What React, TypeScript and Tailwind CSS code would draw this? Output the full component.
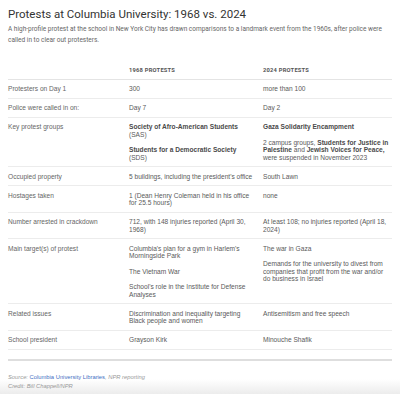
import React from "react";

const body = { fontFamily: '"Liberation Sans", Arial, sans-serif' };
const head = { fontFamily: 'Roboto, "Liberation Sans", sans-serif' };

type Cell = React.ReactNode;
const B = ({ children }: { children: React.ReactNode }) => (
  <b className="font-bold text-[#4a4a4a]">{children}</b>
);

const rows: { label: string; a: Cell; b: Cell }[] = [
  { label: "Protesters on Day 1", a: "300", b: "more than 100" },
  { label: "Police were called in on:", a: "Day 7", b: "Day 2" },
  {
    label: "Key protest groups",
    a: (
      <>
        <p>
          <B>Society of Afro-American Students</B>
          <br />
          (SAS)
        </p>
        <p className="mt-[8px]">
          <B>Students for a Democratic Society</B>
          <br />
          (SDS)
        </p>
      </>
    ),
    b: (
      <>
        <p>
          <B>Gaza Solidarity Encampment</B>
        </p>
        <p className="mt-[8px]">
          2 campus groups, <B>Students for Justice in Palestine</B> and{" "}
          <B>Jewish Voices for Peace,</B> were suspended in November 2023
        </p>
      </>
    ),
  },
  {
    label: "Occupied property",
    a: "5 buildings, including the president's office",
    b: "South Lawn",
  },
  {
    label: "Hostages taken",
    a: "1 (Dean Henry Coleman held in his office for 25.5 hours)",
    b: "none",
  },
  {
    label: "Number arrested in crackdown",
    a: "712, with 148 injuries reported (April 30, 1968)",
    b: "At least 108; no injuries reported (April 18, 2024)",
  },
  {
    label: "Main target(s) of protest",
    a: (
      <>
        <p>Columbia's plan for a gym in Harlem's Morningside Park</p>
        <p className="mt-[8px]">The Vietnam War</p>
        <p className="mt-[8px]">School's role in the Institute for Defense Analyses</p>
      </>
    ),
    b: (
      <>
        <p>The war in Gaza</p>
        <p className="mt-[8px]">
          Demands for the university to divest from companies that profit from the war
          and/or do business in Israel
        </p>
      </>
    ),
  },
  {
    label: "Related issues",
    a: "Discrimination and inequality targeting Black people and women",
    b: "Antisemitism and free speech",
  },
  { label: "School president", a: "Grayson Kirk", b: "Minouche Shafik" },
];

export default function App() {
  return (
    <div className="w-[400px] h-[394px] overflow-hidden bg-white flex flex-col">
      <div className="px-[8px] pt-[8px]">
        <h1 style={head} className="text-[11.5px] leading-[13px] text-[#333] font-normal">
          Protests at Columbia University: 1968 vs. 2024
        </h1>
        <p style={head} className="mt-[3px] text-[6.5px] leading-[11.3px] text-[#666]">
          A high-profile protest at the school in New York City has drawn comparisons to a
          landmark event from the 1960s, after police were called in to clear out protesters.
        </p>

        <div style={body} className="mt-[20px] text-[6.6px] leading-[7.5px] text-[#5a5a5a]">
          <div
            style={head}
            className="grid grid-cols-[121px_134px_1fr] pb-[4.5px] border-b border-[#e4e4e4] text-[5.8px] leading-[7.5px] font-bold tracking-[0.2px] text-[#555]"
          >
            <div />
            <div>1968 PROTESTS</div>
            <div>2024 PROTESTS</div>
          </div>
          {rows.map((r) => (
            <div
              key={r.label}
              className="grid grid-cols-[121px_134px_1fr] pt-[5.5px] pb-[5px] border-b border-[#ececec]"
            >
              <div className="pr-[8px] text-[#666]">{r.label}</div>
              <div className="pr-[6px]">{r.a}</div>
              <div className="pr-[2px]">{r.b}</div>
            </div>
          ))}
        </div>

        <div className="mt-[9px] h-[2px] bg-[#dedede]" />
      </div>
      <div
        style={body}
        className="flex-1 px-[8px] pt-[12px] italic text-[5.8px] leading-[9.5px] text-[#999] bg-gradient-to-b from-white from-[55%] to-[#ececec]"
      >
        <div>
          Source: <span className="not-italic text-[#3f6fc4]">Columbia University Libraries</span>,
          NPR reporting
        </div>
        <div>Credit: Bill Chappell/NPR</div>
      </div>
    </div>
  );
}
